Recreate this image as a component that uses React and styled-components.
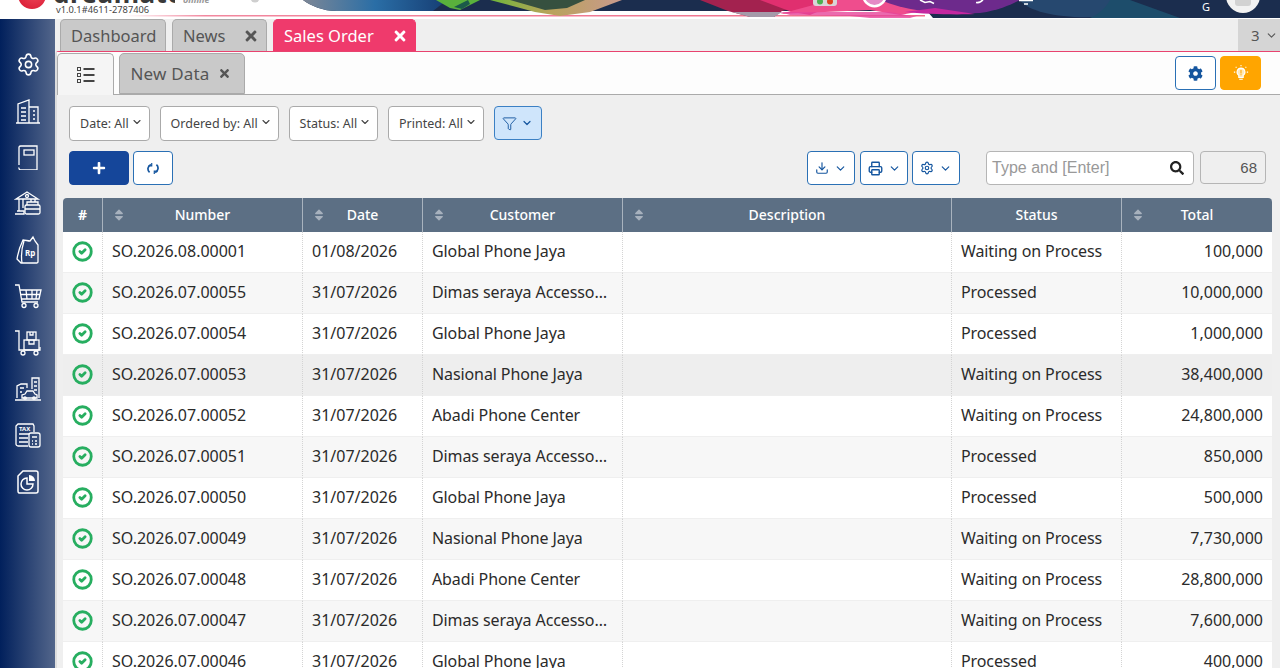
import React from "react";
import styled, { createGlobalStyle } from "styled-components";
import { Settings, Filter, ChevronDown, Download, CircleCheck, Printer } from "lucide-react";
import { FaCog, FaPlus, FaSearch, FaSort, FaTimes } from "react-icons/fa";

const rows = [
  ["SO.2026.08.00001", "01/08/2026", "Global Phone Jaya", "Waiting on Process", "100,000"],
  ["SO.2026.07.00055", "31/07/2026", "Dimas seraya Accessories", "Processed", "10,000,000"],
  ["SO.2026.07.00054", "31/07/2026", "Global Phone Jaya", "Processed", "1,000,000"],
  ["SO.2026.07.00053", "31/07/2026", "Nasional Phone Jaya", "Waiting on Process", "38,400,000"],
  ["SO.2026.07.00052", "31/07/2026", "Abadi Phone Center", "Waiting on Process", "24,800,000"],
  ["SO.2026.07.00051", "31/07/2026", "Dimas seraya Accessories", "Processed", "850,000"],
  ["SO.2026.07.00050", "31/07/2026", "Global Phone Jaya", "Processed", "500,000"],
  ["SO.2026.07.00049", "31/07/2026", "Nasional Phone Jaya", "Waiting on Process", "7,730,000"],
  ["SO.2026.07.00048", "31/07/2026", "Abadi Phone Center", "Waiting on Process", "28,800,000"],
  ["SO.2026.07.00047", "31/07/2026", "Dimas seraya Accessories", "Waiting on Process", "7,600,000"],
  ["SO.2026.07.00046", "31/07/2026", "Global Phone Jaya", "Processed", "400,000"],
];

const columns = [
  { label: "#", width: 39 },
  { label: "Number", width: 200, sort: true },
  { label: "Date", width: 120, sort: true },
  { label: "Customer", width: 200, sort: true },
  { label: "Description", width: 329, sort: true },
  { label: "Status", width: 170 },
  { label: "Total", width: 151, sort: true },
];

const filters = ["Date: All", "Ordered by: All", "Status: All", "Printed: All"];

// sidebar drawings, all on a 26 box
const sideIcons = [
  <Settings key="gear" size={25} strokeWidth={1.5} />,
  <svg key="building" width="26" height="26" viewBox="0 0 26 26" fill="none" stroke="currentColor" strokeWidth="1.3">
    <path d="M1 25h24M3 25V6l11-4v23M14 9h9v16M6 10h5M6 14h5M6 18h5M6 22h5M18 13h2M18 17h2M18 21h2" />
  </svg>,
  <svg key="book" width="26" height="26" viewBox="0 0 26 26" fill="none" stroke="currentColor" strokeWidth="1.3">
    <path d="M4 21V3a2 2 0 0 1 2-1h16v24H6a2 2 0 0 1-2-2.500 2.500 0 0 1 2-2.500h16M6 21h1" />
    <rect x="9" y="6" width="10" height="5" />
  </svg>,
  <svg key="bank" width="28" height="26" viewBox="0 0 28 26" fill="none" stroke="currentColor" strokeWidth="1.3">
    <path d="M2 9l11-7 11 7zM5 9v12M9 9v9M17 9v3M21 9v3M1 24h9v-3H3" />
    <circle cx="13" cy="6" r="1.500" />
    <rect x="11" y="15" width="15" height="9" rx="1.500" />
    <path d="M13 15v-3h11v3M11 19h15" />
  </svg>,
  <svg key="bag" width="26" height="30" viewBox="0 0 26 30" fill="none" stroke="currentColor" strokeWidth="1.3">
    <path d="M8 5C5 11 3 18 2 24l4 4h16a1.500 1.500 0 0 0 1-1.500V10l-3-4-2-4-3 4c-2 0-5-1-7-1zM7 28c-1-7 0-16 2-22" />
    <text x="10" y="21" fontSize="8" fontWeight="700" fontFamily="Noto Sans" fill="currentColor" stroke="none">Rp</text>
  </svg>,
  <svg key="cart" width="28" height="26" viewBox="0 0 28 26" fill="none" stroke="currentColor" strokeWidth="1.3">
    <path d="M1 2h4l3 17h16M6 7h21l-2 9H7.500M12 7l1 9M18 7v9M23 7l-1 9M6.500 11.500h20" />
    <circle cx="10" cy="22.500" r="2" />
    <circle cx="22" cy="22.500" r="2" />
  </svg>,
  <svg key="trolley" width="28" height="26" viewBox="0 0 28 26" fill="none" stroke="currentColor" strokeWidth="1.3">
    <path d="M1 1h4v19h21v-3M5 20v-1" />
    <rect x="10" y="10" width="15" height="10" />
    <rect x="13" y="2" width="9" height="8" />
    <path d="M16 2v3h3V2M15 10v4h5v-4" />
    <circle cx="9" cy="23" r="2" />
    <circle cx="22" cy="23" r="2" />
  </svg>,
  <svg key="city" width="28" height="26" viewBox="0 0 28 26" fill="none" stroke="currentColor" strokeWidth="1.3">
    <path d="M1 24h26M3 22V10l4-2h6v4M18 13V2h7v20M20 6h3M20 10h3M20 14h3M6 12h4M6 16h2" />
    <path d="M8 22v-3l3-1 2-3h6l2 3 2 1v3z" />
    <circle cx="11" cy="22" r="1.200" />
    <circle cx="20" cy="22" r="1.200" />
  </svg>,
  <svg key="tax" width="28" height="26" viewBox="0 0 28 26" fill="none" stroke="currentColor" strokeWidth="1.3">
    <path d="M14 24H4a2 2 0 0 1-2-2V4l2-2h15l1 2v6M5 12h10M5 16h9M5 20h9" />
    <text x="5" y="9" fontSize="6" fontWeight="700" fontFamily="Noto Sans" fill="currentColor" stroke="none">TAX</text>
    <rect x="15" y="11" width="11" height="14" rx="2" />
    <path d="M18 15h5M18 19h1M21 19h2M18 22h1M21 22h2" />
  </svg>,
  <svg key="report" width="26" height="26" viewBox="0 0 26 26" fill="none" stroke="currentColor" strokeWidth="1.5">
    <path d="M4 24a2 2 0 0 1-1-2V7l5-5h13a2 2 0 0 1 2 2v18a2 2 0 0 1-2 2z" />
    <path d="M12 9a6 6 0 1 0 6 6h-6z" />
    <path d="M14 6a6 6 0 0 1 6 6h-6z" fill="currentColor" stroke="none" />
  </svg>,
];

const GlobalStyle = createGlobalStyle`
  html, body {
    margin: 0;
    height: 100%;
    overflow: hidden;
    background: #efefef;
    font-family: "Noto Sans", "Open Sans", sans-serif;
    color: #333;
  }
  * { box-sizing: border-box; }
`;

const Page = styled.div`
  width: 1280px;
  height: 668px;
  display: flex;
  flex-direction: column;
  overflow: hidden;
`;

const Header = styled.header`
  position: relative;
  height: 19px;
  flex: none;
  overflow: hidden;
  background: #fff;
  display: flex;
  padding-left: 18px;
  gap: 5px;
`;

const Banner = styled.svg`
  position: absolute;
  top: 0;
  left: 0;
`;

const LogoMark = styled.span`
  flex: none;
  width: 28px;
  height: 28px;
  margin-top: -19px;
  border-radius: 50%;
  background: radial-gradient(circle at 60% 40%, #f04a5c, #d5142e);
`;

const Brand = styled.div`
  position: relative;
  display: flex;
  flex-direction: column;
  margin-left: 5px;
`;

const BrandName = styled.div`
  width: 122px;
  height: 4px;
  margin-left: -3px;
  overflow: hidden;
  font-size: 26px;
  font-weight: 700;
  color: #3a3a3a;
  white-space: nowrap;
`;

const BrandWord = styled.div`
  margin-top: -20px;
  line-height: 26px;
  letter-spacing: 0.5px;
`;

const BrandTag = styled.div`
  position: absolute;
  left: 127px;
  top: 0;
  height: 4px;
  overflow: hidden;
  font-size: 9px;
  line-height: 9px;
  font-style: italic;
  font-weight: 700;
  color: #999;
  span {
    display: block;
    margin-top: -5px;
  }
`;

const Version = styled.div`
  font-size: 9.3px;
  line-height: 11px;
  color: #444;
  white-space: nowrap;
`;

const Body = styled.div`
  flex: 1;
  display: flex;
  min-height: 0;
`;

const Sidebar = styled.nav`
  width: 55px;
  flex: none;
  background: linear-gradient(90deg, #01205c 0%, #53668b 100%);
  display: flex;
  flex-direction: column;
  align-items: center;
  padding: 22px 0 0 1px;
  color: #fff;
`;

const SideItem = styled.div`
  height: 46.4px;
  flex: none;
  display: flex;
  align-items: center;
  justify-content: center;
`;

const Main = styled.main`
  flex: 1;
  min-width: 0;
  display: flex;
  flex-direction: column;
`;

const TabBar = styled.div`
  height: 32px;
  flex: none;
  display: flex;
  gap: 6px;
  padding-left: 5px;
`;

const Tab = styled.div`
  height: 32px;
  padding: 0 7px 0 10px;
  width: ${(p) => p.$width}px;
  display: flex;
  align-items: center;
  justify-content: space-between;
  font-size: 16.5px;
  border-radius: 5px 5px 0 0;
  color: ${(p) => (p.$active ? "#fff" : "#555")};
  background: ${(p) => (p.$active ? "#ef3a6c" : "#c9c9c9")};
  border: 1px solid ${(p) => (p.$active ? "#ef3a6c" : "#aaa")};
  border-bottom: none;
`;

const TabMenu = styled.div`
  margin-left: auto;
  width: 42px;
  padding-left: 13px;
  background: #d5d5d5;
  color: #555;
  font-size: 15px;
  display: flex;
  align-items: center;
  gap: 5px;
`;

const Panel = styled.section`
  flex: 1;
  min-height: 0;
  display: flex;
  flex-direction: column;
  border-top: 1.500px solid #e8436f;
  border-left: 2px solid #ddd;
  border-top-left-radius: 4px;
`;

const SubBar = styled.div`
  height: 43px;
  flex: none;
  background: #fdfdfd;
  display: flex;
  align-items: flex-end;
  gap: 5px;
  position: relative;
  border-bottom: 1px solid #aaa;
  padding-right: 19px;
`;

const SubTab = styled.div`
  height: ${(p) => (p.$active ? 42 : 41)}px;
  width: ${(p) => p.$width}px;
  margin-bottom: ${(p) => (p.$active ? -1 : 0)}px;
  padding-right: ${(p) => (p.$active ? 0 : 3)}px;
  border: 1px solid #aaa;
  border-bottom: ${(p) => (p.$active ? "none" : "1px solid #aaa")};
  border-radius: 5px 5px 0 0;
  background: ${(p) => (p.$active ? "#f5f5f5" : "#c9c9c9")};
  color: #555;
  font-size: 17px;
  letter-spacing: 0.2px;
  display: flex;
  align-items: center;
  justify-content: center;
  gap: 8px;
`;

const SubActions = styled.div`
  margin-left: auto;
  align-self: center;
  display: flex;
  gap: 4px;
`;

const SquareButton = styled.button`
  width: ${(p) => p.$width || 41}px;
  height: 34px;
  padding: 0;
  border-radius: 4px;
  display: flex;
  align-items: center;
  justify-content: center;
  gap: ${(p) => p.$gap || 0}px;
  color: ${(p) => (p.$tone === "amber" ? "#fff" : p.$tone === "solid" ? "#fff" : "#15569f")};
  background: ${(p) => (p.$tone === "amber" ? "#ffa500" : p.$tone === "solid" ? "#15469a" : "#fff")};
  border: 1px solid ${(p) => (p.$tone === "amber" ? "#ffa500" : p.$tone === "solid" ? "#15469a" : "#2a70b5")};
`;

const ExportButton = styled(SquareButton)`
  margin-right: 1px;
`;

const Content = styled.div`
  flex: 1;
  min-height: 0;
  padding: 11px 0 0 6px;
`;

const FilterRow = styled.div`
  display: flex;
  padding-left: 6px;
  gap: 9.8px;
  height: 35px;
`;

const FilterChip = styled.button`
  height: 35px;
  padding: 0 6px 0 10px;
  font-family: inherit;
  font-size: 12.5px;
  color: #444;
  background: #fff;
  border: 1px solid #aaa;
  border-radius: 4px;
  display: flex;
  align-items: center;
  gap: 2px;
  white-space: nowrap;
  svg { margin-top: -4px; }
`;

const FilterToggle = styled.button`
  width: 48px;
  height: 34px;
  padding: 0;
  background: #cfe5fb;
  border: 1px solid #3b80c4;
  border-radius: 4px;
  color: #15569f;
  display: flex;
  align-items: center;
  justify-content: center;
  gap: 4px;
`;

const ToolRow = styled.div`
  margin-top: 10px;
  height: 34px;
  padding-left: 6px;
  display: flex;
  gap: 4px;
`;

const RightTools = styled.div`
  margin-left: auto;
  display: flex;
  gap: 4px;
  padding-right: 14px;
`;

const SearchBox = styled.div`
  width: 208px;
  height: 34px;
  margin-left: 22px;
  padding: 0 9px 0 5px;
  background: #fff;
  border: 1px solid #b5b5b5;
  border-radius: 4px;
  display: flex;
  align-items: center;
  justify-content: space-between;
  font-family: "Liberation Sans", Arial, sans-serif;
  font-size: 16px;
  color: #999;
  svg { color: #222; }
`;

const CountBox = styled.div`
  width: 66px;
  height: 33px;
  margin-left: 2px;
  padding-right: 8px;
  background: #efefef;
  border: 1px solid #b5b5b5;
  border-radius: 4px;
  display: flex;
  align-items: center;
  justify-content: flex-end;
  font-family: "Liberation Sans", Arial, sans-serif;
  font-size: 15px;
  color: #555;
`;

const Table = styled.table`
  margin-top: 13px;
  width: 1209px;
  table-layout: fixed;
  border-collapse: separate;
  border-spacing: 0;
`;

const HeadCell = styled.th`
  position: relative;
  height: 34px;
  padding: 0 0 2px;
  background: #5c6f84;
  color: #fff;
  font-size: 14px;
  font-weight: 500;
  text-align: center;
  border-left: 1px solid #a9b3be;
  &:first-child { border-left: none; border-top-left-radius: 4px; font-weight: 700; }
  &:last-child { border-top-right-radius: 4px; }
`;

const SortMark = styled.span`
  position: absolute;
  left: 9px;
  top: 10px;
  display: flex;
  color: #a7b1bd;
`;

const Row = styled.tr`
  background: ${(p) => (p.$hover ? "#eeeeee" : p.$odd ? "#f7f7f7" : "#fff")};
`;

const Cell = styled.td`
  height: 41px;
  padding: 0 9px 2px 9px;
  font-size: 16px;
  letter-spacing: ${(p) => (p.$tight ? "-0.1px" : "0")};
  color: #2b2b2b;
  white-space: nowrap;
  overflow: hidden;
  text-overflow: ellipsis;
  text-align: ${(p) => (p.$right ? "right" : "left")};
  border-left: 1px dotted #d4d4d4;
  border-bottom: 1px solid #efefef;
  &:first-child { border-left: none; padding: 0 0 2px; color: #27ae60; }
`;

const CheckWrap = styled.div`
  display: flex;
  justify-content: center;
`;

function ListIcon() {
  return (
    <svg width="20" height="18" viewBox="0 0 20 18" fill="none" stroke="#444">
      <rect x="1.500" y="1.500" width="3" height="3" strokeWidth="1" />
      <rect x="1.500" y="7.500" width="3" height="3" strokeWidth="1" />
      <rect x="1.500" y="13.500" width="3" height="3" strokeWidth="1" />
      <path d="M7.500 3h11M7.500 9h11M7.500 15h11" strokeWidth="2" />
    </svg>
  );
}

function BulbIcon() {
  return (
    <svg width="16" height="18" viewBox="0 0 18 20" fill="none" stroke="#fff" strokeWidth="1.200">
      <path d="M9 4.500a4.500 4.500 0 0 0-2.500 8.200V15h5v-2.300A4.500 4.500 0 0 0 9 4.500z" fill="#ffe9b8" />
      <path d="M9 6.500v4M9 11.500v1" stroke="#ffa500" />
      <path d="M7 17h4M9 1v1.500M3 3l1 1M15 3l-1 1M1 9h1.500M15.500 9H17" />
    </svg>
  );
}

function SyncIcon() {
  return (
    <svg width="12" height="13" viewBox="0 0 14 14" fill="none" stroke="#15569f" strokeWidth="2">
      <path d="M3 11.500A5.500 5.500 0 0 1 4.500 2.300M11 2.500a5.500 5.500 0 0 1-1.500 9.200" />
      <path d="M5.500 0.500v3.500H2M8.500 13.500V10H12" strokeWidth="1.400" />
    </svg>
  );
}

function BannerArt() {
  return (
    <Banner width="1280" height="19" viewBox="0 0 1280 19">
      <defs>
        <linearGradient id="wave" x1="0" x2="1" y1="0" y2="0">
          <stop offset="0" stopColor="#7d8796" />
          <stop offset="0.5" stopColor="#2a6ea6" />
          <stop offset="1" stopColor="#163d73" />
        </linearGradient>
        <linearGradient id="tan" x1="0" x2="1" y1="0" y2="0">
          <stop offset="0" stopColor="#6fb53a" />
          <stop offset="0.45" stopColor="#b9a35a" />
          <stop offset="1" stopColor="#c99a8e" />
        </linearGradient>
        <linearGradient id="pinkfade" x1="0" x2="1" y1="0" y2="0">
          <stop offset="0" stopColor="#fff" />
          <stop offset="0.1" stopColor="#f2889f" />
          <stop offset="1" stopColor="#ef6f8b" />
        </linearGradient>
      </defs>
      <rect x="125" y="15" width="800" height="1.500" fill="url(#pinkfade)" />
      <path d="M303 0c8 6 20 11 34 11h590l6 7h347V0z" fill="#1b2d4e" />
      <path d="M303 0c8 6 20 11 34 11h96l14-11z" fill="url(#wave)" />
      <path d="M436 0l14 8 10 2 20-10z" fill="#5ab13c" />
      <path d="M470 4l-8 5-8-2 14-7z" fill="#1b5a4a" />
      <path d="M490 0l45 12 25 4 30-4 32-12z" fill="url(#tan)" />
      <path d="M510 0l35 10 22-2 18-8z" fill="#36503f" />
      <path d="M700 0l28 11 22 6h24l8-6 40-11z" fill="#a3224f" />
      <path d="M732 12l18 5h24l8-5z" fill="#a59aa9" />
      <path d="M780 0h-20l32 12 18 3 14-6 10-9z" fill="#e02f6f" />
      <path d="M780 14l90-4 30 5 22-4-30-11h-60z" fill="#ef4d8d" />
      <path d="M780 12h110l22 4 8-1-10 3h-40l-20-2-60-1z" fill="#e6459a" opacity="0.8" />
      <path d="M880 0c30 12 60 14 100 13 20-3 30-8 40-13z" fill="#6d2a8c" />
      <path d="M905 12c20 2 50 3 70 2l-40-6z" fill="#c427a0" />
      <path d="M1020 0c10 14 50 20 90 16l10-16z" fill="#26486f" />
      <path d="M1110 0c-5 10-15 16-20 18h90l-50-18z" fill="#1d4d6b" />
      <rect x="813" y="-8" width="24" height="14" rx="3" fill="#d9d5d8" />
      <circle cx="820" cy="1.500" r="3" fill="#4caf50" />
      <circle cx="830" cy="1.500" r="3" fill="#e0401f" />
      <circle cx="874.500" cy="-5" r="12.500" fill="#fff" />
      <circle cx="874.500" cy="-5" r="10" fill="#e58ac6" />
      <path d="M920 0l5 2.500 5-1 4 2M976 2.500a7 7 0 0 0 7-3M966 0" stroke="#fff" strokeWidth="1.600" fill="none" />
      <path d="M1019 0.500h14M1024 4h4" stroke="#fff" strokeWidth="1.600" />
      <circle cx="1243" cy="-4" r="17" fill="#f2f2f2" />
      <rect x="1235" y="-8" width="16" height="14" rx="3" fill="#d2d2d2" />
      <text x="1202" y="11" fontSize="11" fontFamily="Noto Sans" fill="#fff">G</text>
      <circle cx="255" cy="-2" r="4.500" fill="#cfcfcf" />
    </Banner>
  );
}

export default function App() {
  return (
    <Page>
      <GlobalStyle />
      <Header>
        <BannerArt />
        <LogoMark />
        <Brand>
          <BrandName>
            <BrandWord>dreamate</BrandWord>
          </BrandName>
          <BrandTag>
            <span>online</span>
          </BrandTag>
          <Version>v1.0.1#4611-2787406</Version>
        </Brand>
      </Header>
      <Body>
        <Sidebar>
          {sideIcons.map((icon, i) => (
            <SideItem key={i}>{icon}</SideItem>
          ))}
        </Sidebar>
        <Main>
          <TabBar>
            <Tab $width={106}>Dashboard</Tab>
            <Tab $width={95}>
              News <FaTimes size={16} />
            </Tab>
            <Tab $width={143} $active>
              Sales Order <FaTimes size={16} />
            </Tab>
            <TabMenu>
              3 <ChevronDown size={13} />
            </TabMenu>
          </TabBar>
          <Panel>
            <SubBar>
              <SubTab $width={57} $active>
                <ListIcon />
              </SubTab>
              <SubTab $width={126}>
                New Data <FaTimes size={13} />
              </SubTab>
              <SubActions>
                <SquareButton>
                  <FaCog size={15} />
                </SquareButton>
                <SquareButton $tone="amber">
                  <BulbIcon />
                </SquareButton>
              </SubActions>
            </SubBar>
            <Content>
              <FilterRow>
                {filters.map((f) => (
                  <FilterChip key={f}>
                    {f} <ChevronDown size={12} strokeWidth={2.2} />
                  </FilterChip>
                ))}
                <FilterToggle>
                  <Filter size={15} strokeWidth={1.500} />
                  <ChevronDown size={12} strokeWidth={2.4} />
                </FilterToggle>
              </FilterRow>
              <ToolRow>
                <SquareButton $width={60} $tone="solid">
                  <FaPlus size={14} />
                </SquareButton>
                <SquareButton $width={40}>
                  <SyncIcon />
                </SquareButton>
                <RightTools>
                  <ExportButton $width={48} $gap={5}>
                    <Download size={14} />
                    <ChevronDown size={13} strokeWidth={2.2} />
                  </ExportButton>
                  <SquareButton $width={48} $gap={5}>
                    <Printer size={15} strokeWidth={2.2} />
                    <ChevronDown size={13} strokeWidth={2.2} />
                  </SquareButton>
                  <SquareButton $width={48} $gap={5}>
                    <Settings size={14} />
                    <ChevronDown size={13} strokeWidth={2.2} />
                  </SquareButton>
                  <SearchBox>
                    Type and [Enter]
                    <FaSearch size={14} />
                  </SearchBox>
                  <CountBox>68</CountBox>
                </RightTools>
              </ToolRow>
              <Table>
                <colgroup>
                  {columns.map((c) => (
                    <col key={c.label} style={{ width: c.width }} />
                  ))}
                </colgroup>
                <thead>
                  <tr>
                    {columns.map((c) => (
                      <HeadCell key={c.label}>
                        {c.sort && (
                          <SortMark>
                            <FaSort size={14} />
                          </SortMark>
                        )}
                        {c.label}
                      </HeadCell>
                    ))}
                  </tr>
                </thead>
                <tbody>
                  {rows.map((r, i) => (
                    <Row key={r[0]} $odd={i % 2 === 1} $hover={i === 3}>
                      <Cell>
                        <CheckWrap>
                          <CircleCheck size={21} strokeWidth={3.2} />
                        </CheckWrap>
                      </Cell>
                      <Cell>{r[0]}</Cell>
                      <Cell>{r[1]}</Cell>
                      <Cell $tight>{r[2]}</Cell>
                      <Cell />
                      <Cell $tight>{r[3]}</Cell>
                      <Cell $right>{r[4]}</Cell>
                    </Row>
                  ))}
                </tbody>
              </Table>
            </Content>
          </Panel>
        </Main>
      </Body>
    </Page>
  );
}
